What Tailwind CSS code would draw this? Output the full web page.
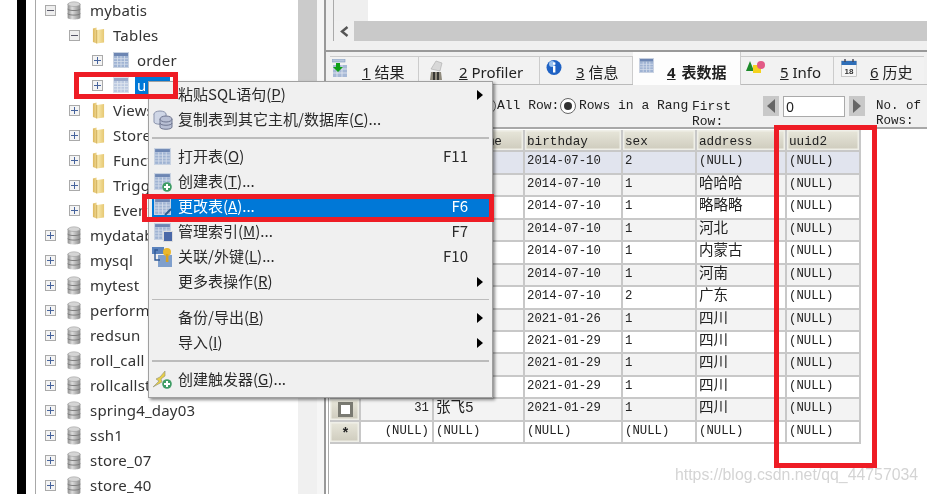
<!DOCTYPE html>
<html lang="zh">
<head>
<meta charset="utf-8">
<title>SQLyog</title>
<script src="https://cdn.jsdelivr.net/npm/@tailwindcss/browser@4"></script>
</head>
<body class="m-0 bg-white">
<svg class="absolute w-0 h-0" aria-hidden="true">
  <defs>
    <linearGradient id="dbg" x1="0" x2="1" y1="0" y2="0"><stop offset="0" stop-color="#8d8d8d"/><stop offset=".35" stop-color="#dcdcdc"/><stop offset="1" stop-color="#8a8a8a"/></linearGradient>
    <linearGradient id="fg" x1="0" x2="1" y1="0" y2="0"><stop offset="0" stop-color="#dcb65a"/><stop offset=".45" stop-color="#f7e6a8"/><stop offset="1" stop-color="#e6c873"/></linearGradient>
    <symbol id="db" viewBox="0 0 14 22">
      <path d="M0 3.5C0 1.5 14 1.5 14 3.5V18.5C14 21 0 21 0 18.5Z" fill="url(#dbg)"/>
      <ellipse cx="7" cy="3.5" rx="6.5" ry="2.6" fill="#d5d5d5" stroke="#9a9a9a" stroke-width=".6"/>
      <path d="M0 9C2 11 12 11 14 9M0 14C2 16 12 16 14 14" fill="none" stroke="#777" stroke-width="1"/>
    </symbol>
    <symbol id="folder" viewBox="0 0 14 18">
      <path d="M1 1.5 5 .5V3L13 2V16.5L5 17.5 1 16Z" fill="url(#fg)"/>
      <path d="M5 3V17.5" stroke="#c9a64f" stroke-width=".8"/>
    </symbol>
    <symbol id="table" viewBox="0 0 16 16">
      <rect x=".5" y=".5" width="15" height="15" fill="#fff" stroke="#c9d3e2"/>
      <rect x="1" y="1" width="14" height="3" fill="#6d86b3"/>
      <rect x="1" y="4" width="14" height="11" fill="#9fb3d3"/>
      <path d="M4.5 4V15M8 4V15M11.5 4V15M1 6.7H15M1 9.5H15M1 12.2H15" stroke="#d6deeb" stroke-width=".8"/>
    </symbol>
    <symbol id="plusg" viewBox="0 0 10 10">
      <circle cx="5" cy="5" r="4.8" fill="#3e9c64"/>
      <path d="M5 2V8M2 5H8" stroke="#fff" stroke-width="2"/>
    </symbol>
  </defs>
</svg>

<div class="relative w-[927px] h-[494px] overflow-hidden bg-white flex blur-[0.4px] font-['Noto_Sans',sans-serif] text-[#333]">
  <div class="w-[17px] shrink-0 bg-white"></div>
  <div class="w-[9px] shrink-0 bg-black"></div>
  <div class="w-[9px] shrink-0 bg-white"></div>
  <div class="w-[1px] shrink-0 bg-[#a8a8a8]"></div>

  <!-- tree -->
  <div class="w-[262px] shrink-0 h-full overflow-hidden text-[15px] tracking-[0.2px]">
    <div class="-mt-[2px]">
      <div class="flex items-center h-[25px] pl-[9px]">
        <span class="w-[11px] h-[11px] border border-[#aaa] bg-[#eee] flex items-center justify-center shrink-0"><span class="w-[7px] h-[1.5px] bg-[#556]"></span></span>
        <svg class="w-[14px] h-[20px] ml-[11px] shrink-0"><use href="#db"/></svg><span class="ml-[9px]">mybatis</span>
      </div>
      <div class="flex items-center h-[25px] pl-[33px]">
        <span class="w-[11px] h-[11px] border border-[#aaa] bg-[#eee] flex items-center justify-center shrink-0"><span class="w-[7px] h-[1.5px] bg-[#556]"></span></span>
        <svg class="w-[13px] h-[17px] ml-[12px] shrink-0"><use href="#folder"/></svg><span class="ml-[8px]">Tables</span>
      </div>
      <div class="flex items-center h-[25px] pl-[56px]">
        <span class="relative w-[11px] h-[11px] border border-[#aaa] bg-[#f4f4f4] flex items-center justify-center shrink-0"><span class="w-[7px] h-[1.5px] bg-[#46639c]"></span><span class="absolute w-[1.5px] h-[7px] bg-[#46639c]"></span></span>
        <svg class="w-[16px] h-[16px] ml-[10px] -mt-[1px] shrink-0"><use href="#table"/></svg><span class="ml-[8px]">order</span>
      </div>
      <div class="flex items-center h-[25px] pl-[56px]">
        <span class="relative w-[11px] h-[11px] border border-[#aaa] bg-[#f4f4f4] flex items-center justify-center shrink-0"><span class="w-[7px] h-[1.5px] bg-[#46639c]"></span><span class="absolute w-[1.5px] h-[7px] bg-[#46639c]"></span></span>
        <svg class="w-[16px] h-[16px] ml-[10px] -mt-[1px] shrink-0 opacity-70"><use href="#table"/></svg><span class="ml-[6px] w-[35px] h-[19px] bg-[#0078d7] text-white pl-[2px] leading-[18px]">u</span>
      </div>
      <div class="flex items-center h-[25px] pl-[33px]">
        <span class="relative w-[11px] h-[11px] border border-[#aaa] bg-[#f4f4f4] flex items-center justify-center shrink-0"><span class="w-[7px] h-[1.5px] bg-[#46639c]"></span><span class="absolute w-[1.5px] h-[7px] bg-[#46639c]"></span></span>
        <svg class="w-[13px] h-[17px] ml-[12px] shrink-0"><use href="#folder"/></svg><span class="ml-[8px]">Views</span>
      </div>
      <div class="flex items-center h-[25px] pl-[33px]">
        <span class="relative w-[11px] h-[11px] border border-[#aaa] bg-[#f4f4f4] flex items-center justify-center shrink-0"><span class="w-[7px] h-[1.5px] bg-[#46639c]"></span><span class="absolute w-[1.5px] h-[7px] bg-[#46639c]"></span></span>
        <svg class="w-[13px] h-[17px] ml-[12px] shrink-0"><use href="#folder"/></svg><span class="ml-[8px]">Stored</span>
      </div>
      <div class="flex items-center h-[25px] pl-[33px]">
        <span class="relative w-[11px] h-[11px] border border-[#aaa] bg-[#f4f4f4] flex items-center justify-center shrink-0"><span class="w-[7px] h-[1.5px] bg-[#46639c]"></span><span class="absolute w-[1.5px] h-[7px] bg-[#46639c]"></span></span>
        <svg class="w-[13px] h-[17px] ml-[12px] shrink-0"><use href="#folder"/></svg><span class="ml-[8px]">Functions</span>
      </div>
      <div class="flex items-center h-[25px] pl-[33px]">
        <span class="relative w-[11px] h-[11px] border border-[#aaa] bg-[#f4f4f4] flex items-center justify-center shrink-0"><span class="w-[7px] h-[1.5px] bg-[#46639c]"></span><span class="absolute w-[1.5px] h-[7px] bg-[#46639c]"></span></span>
        <svg class="w-[13px] h-[17px] ml-[12px] shrink-0"><use href="#folder"/></svg><span class="ml-[8px]">Triggers</span>
      </div>
      <div class="flex items-center h-[25px] pl-[33px]">
        <span class="relative w-[11px] h-[11px] border border-[#aaa] bg-[#f4f4f4] flex items-center justify-center shrink-0"><span class="w-[7px] h-[1.5px] bg-[#46639c]"></span><span class="absolute w-[1.5px] h-[7px] bg-[#46639c]"></span></span>
        <svg class="w-[13px] h-[17px] ml-[12px] shrink-0"><use href="#folder"/></svg><span class="ml-[8px]">Events</span>
      </div>
      <div class="flex items-center h-[25px] pl-[9px]">
        <span class="relative w-[11px] h-[11px] border border-[#aaa] bg-[#f4f4f4] flex items-center justify-center shrink-0"><span class="w-[7px] h-[1.5px] bg-[#46639c]"></span><span class="absolute w-[1.5px] h-[7px] bg-[#46639c]"></span></span>
        <svg class="w-[14px] h-[20px] ml-[11px] shrink-0"><use href="#db"/></svg><span class="ml-[9px]">mydatabase</span>
      </div>
      <div class="flex items-center h-[25px] pl-[9px]">
        <span class="relative w-[11px] h-[11px] border border-[#aaa] bg-[#f4f4f4] flex items-center justify-center shrink-0"><span class="w-[7px] h-[1.5px] bg-[#46639c]"></span><span class="absolute w-[1.5px] h-[7px] bg-[#46639c]"></span></span>
        <svg class="w-[14px] h-[20px] ml-[11px] shrink-0"><use href="#db"/></svg><span class="ml-[9px]">mysql</span>
      </div>
      <div class="flex items-center h-[25px] pl-[9px]">
        <span class="relative w-[11px] h-[11px] border border-[#aaa] bg-[#f4f4f4] flex items-center justify-center shrink-0"><span class="w-[7px] h-[1.5px] bg-[#46639c]"></span><span class="absolute w-[1.5px] h-[7px] bg-[#46639c]"></span></span>
        <svg class="w-[14px] h-[20px] ml-[11px] shrink-0"><use href="#db"/></svg><span class="ml-[9px]">mytest</span>
      </div>
      <div class="flex items-center h-[25px] pl-[9px]">
        <span class="relative w-[11px] h-[11px] border border-[#aaa] bg-[#f4f4f4] flex items-center justify-center shrink-0"><span class="w-[7px] h-[1.5px] bg-[#46639c]"></span><span class="absolute w-[1.5px] h-[7px] bg-[#46639c]"></span></span>
        <svg class="w-[14px] h-[20px] ml-[11px] shrink-0"><use href="#db"/></svg><span class="ml-[9px]">performance</span>
      </div>
      <div class="flex items-center h-[25px] pl-[9px]">
        <span class="relative w-[11px] h-[11px] border border-[#aaa] bg-[#f4f4f4] flex items-center justify-center shrink-0"><span class="w-[7px] h-[1.5px] bg-[#46639c]"></span><span class="absolute w-[1.5px] h-[7px] bg-[#46639c]"></span></span>
        <svg class="w-[14px] h-[20px] ml-[11px] shrink-0"><use href="#db"/></svg><span class="ml-[9px]">redsun</span>
      </div>
      <div class="flex items-center h-[25px] pl-[9px]">
        <span class="relative w-[11px] h-[11px] border border-[#aaa] bg-[#f4f4f4] flex items-center justify-center shrink-0"><span class="w-[7px] h-[1.5px] bg-[#46639c]"></span><span class="absolute w-[1.5px] h-[7px] bg-[#46639c]"></span></span>
        <svg class="w-[14px] h-[20px] ml-[11px] shrink-0"><use href="#db"/></svg><span class="ml-[9px]">roll_call</span>
      </div>
      <div class="flex items-center h-[25px] pl-[9px]">
        <span class="relative w-[11px] h-[11px] border border-[#aaa] bg-[#f4f4f4] flex items-center justify-center shrink-0"><span class="w-[7px] h-[1.5px] bg-[#46639c]"></span><span class="absolute w-[1.5px] h-[7px] bg-[#46639c]"></span></span>
        <svg class="w-[14px] h-[20px] ml-[11px] shrink-0"><use href="#db"/></svg><span class="ml-[9px]">rollcallst</span>
      </div>
      <div class="flex items-center h-[25px] pl-[9px]">
        <span class="relative w-[11px] h-[11px] border border-[#aaa] bg-[#f4f4f4] flex items-center justify-center shrink-0"><span class="w-[7px] h-[1.5px] bg-[#46639c]"></span><span class="absolute w-[1.5px] h-[7px] bg-[#46639c]"></span></span>
        <svg class="w-[14px] h-[20px] ml-[11px] shrink-0"><use href="#db"/></svg><span class="ml-[9px]">spring4_day03</span>
      </div>
      <div class="flex items-center h-[25px] pl-[9px]">
        <span class="relative w-[11px] h-[11px] border border-[#aaa] bg-[#f4f4f4] flex items-center justify-center shrink-0"><span class="w-[7px] h-[1.5px] bg-[#46639c]"></span><span class="absolute w-[1.5px] h-[7px] bg-[#46639c]"></span></span>
        <svg class="w-[14px] h-[20px] ml-[11px] shrink-0"><use href="#db"/></svg><span class="ml-[9px]">ssh1</span>
      </div>
      <div class="flex items-center h-[25px] pl-[9px]">
        <span class="relative w-[11px] h-[11px] border border-[#aaa] bg-[#f4f4f4] flex items-center justify-center shrink-0"><span class="w-[7px] h-[1.5px] bg-[#46639c]"></span><span class="absolute w-[1.5px] h-[7px] bg-[#46639c]"></span></span>
        <svg class="w-[14px] h-[20px] ml-[11px] shrink-0"><use href="#db"/></svg><span class="ml-[9px]">store_07</span>
      </div>
      <div class="flex items-center h-[25px] pl-[9px]">
        <span class="relative w-[11px] h-[11px] border border-[#aaa] bg-[#f4f4f4] flex items-center justify-center shrink-0"><span class="w-[7px] h-[1.5px] bg-[#46639c]"></span><span class="absolute w-[1.5px] h-[7px] bg-[#46639c]"></span></span>
        <svg class="w-[14px] h-[20px] ml-[11px] shrink-0"><use href="#db"/></svg><span class="ml-[9px]">store_40</span>
      </div>
    </div>
  </div>

  <!-- tree scrollbar -->
  <div class="w-[19px] shrink-0 h-full bg-[#f0f0f0]"><div class="h-[250px] bg-[#cbcbcb]"></div></div>
  <div class="w-[7px] shrink-0 h-full bg-[#f6f6f6]"></div>
  <div class="w-[2px] shrink-0 h-full bg-[#999]"></div>

  <!-- right pane -->
  <div class="flex-1 min-w-0 h-full flex flex-col">
    <div class="h-[41px] shrink-0 bg-[#f0f0f0] pl-[7px]">
      <div class="h-full border-l border-[#aaa] flex flex-col">
        <div class="h-[21px] flex"><div class="w-[34px] bg-[#efefef]"></div><div class="flex-1 bg-white"></div></div>
        <div class="h-[20px] flex">
          <div class="w-[20px] bg-[#f0f0f0] flex items-center justify-center"><svg class="w-[9px] h-[11px]" viewBox="0 0 9 11"><path d="M7.5 1 2 5.5 7.5 10" fill="none" stroke="#555" stroke-width="2.4"/></svg></div>
          <div class="flex-1 bg-[#c9c9c9]"></div>
        </div>
      </div>
    </div>
    <div class="h-[9px] shrink-0 bg-[#f0f0f0]"></div>
    <div class="h-[2px] shrink-0 bg-[#999]"></div>

    <!-- tabs -->
    <div class="h-[33px] shrink-0 bg-[#f0f0f0] pl-[4px] pt-[4px] flex text-[15px] text-[#222] font-['Noto_Sans','Noto_Sans_CJK_SC',sans-serif] border-b border-[#bbb]">
      <div class="w-[89px] h-full flex items-center bg-[#f2f2f2] border-r border-t border-[#ccc] pl-[2px]">
        <svg class="w-[15px] h-[18px] -mt-[6px] shrink-0" viewBox="0 0 15 18"><rect x="0" y="0" width="13" height="3" fill="#b7c6dc" stroke="#7d96bd" stroke-width=".6"/><rect x="1" y="6" width="14" height="12" fill="#a7b9d6"/><path d="M5 6V18M10 6V18M1 10H15M1 14H15" stroke="#e4e9f2" stroke-width=".8"/><path d="M4 4H8V8H11L6 13 1 8H4Z" fill="#10a018"/></svg>
        <span class="ml-[15px] mt-[4px]"><span class="underline">1</span> 结果</span>
      </div>
      <div class="w-[121px] h-full flex items-center bg-[#f2f2f2] border-r border-t border-[#ccc] pl-[9px]">
        <svg class="w-[17px] h-[20px] -mt-[2px] shrink-0" viewBox="0 0 17 20"><path d="M3 9 8 1l6 2-2 8Z" fill="#d8d8d8" stroke="#aaa" stroke-width=".6"/><path d="M3 12h10l1 8H2Z" fill="#8f8a7d"/><path d="M6 12v8M10 12v8" stroke="#222" stroke-width="1.6"/></svg>
        <span class="ml-[14px] mt-[4px]"><span class="underline">2</span> Profiler</span>
      </div>
      <div class="w-[93px] h-full flex items-center bg-[#f2f2f2] border-r border-t border-[#ccc] pl-[6px]">
        <svg class="w-[16px] h-[17px] -mt-[6px] shrink-0" viewBox="0 0 16 17"><circle cx="8" cy="8.5" r="7.5" fill="#1f62c4"/><circle cx="6" cy="5" r="3" fill="#9cc3f0"/><rect x="7" y="7" width="2.4" height="6.5" fill="#fff"/><rect x="7" y="3.5" width="2.4" height="2.2" fill="#fff"/></svg>
        <span class="ml-[14px] mt-[4px]"><span class="underline">3</span> 信息</span>
      </div>
      <div class="w-[108px] h-[34px] -mt-[4px] flex items-center bg-[#fdfdfd] border-r border-[#ccc] pl-[6px] font-bold">
        <svg class="w-[15px] h-[17px] -mt-[8px] shrink-0"><use href="#table"/></svg>
        <span class="ml-[13px] mt-[7px]"><span class="underline mr-[2px]">4</span> 表数据</span>
      </div>
      <div class="w-[93px] h-full flex items-center bg-[#f2f2f2] border-r border-t border-[#ccc] pl-[5px]">
        <svg class="w-[20px] h-[14px] -mt-[8px] shrink-0" viewBox="0 0 20 14"><path d="M0 11 4 1l4 10Z" fill="#1d8a2a"/><rect x="7" y="5" width="8" height="8" fill="#f4d21e"/><circle cx="15" cy="5" r="4" fill="#e25a86"/></svg>
        <span class="ml-[14px] mt-[4px]"><span class="underline">5</span> Info</span>
      </div>
      <div class="w-[90px] h-full flex items-center bg-[#f2f2f2] border-t border-[#ccc] pl-[7px]">
        <svg class="w-[16px] h-[18px] -mt-[6px] shrink-0" viewBox="0 0 16 18"><rect x=".5" y="2" width="15" height="15.5" fill="#f6f6f6" stroke="#aaa" stroke-width=".6"/><rect x=".5" y="2" width="15" height="4" fill="#2f6fb8"/><path d="M4 0V3M12 0V3" stroke="#445" stroke-width="1.4"/><text x="8" y="14.5" text-anchor="middle" font-size="8" font-weight="700" fill="#333" font-family="Liberation Sans">18</text></svg>
        <span class="ml-[13px] mt-[4px]"><span class="underline">6</span> 历史</span>
      </div>
    </div>

    <!-- toolbar -->
    <div class="h-[44px] shrink-0 bg-[#f0f0f0] border-b-2 border-[#a8a8a8] flex items-center pl-[154px] font-['Liberation_Mono',monospace] text-[13px] text-[#222]">
      <span class="w-[16px] h-[16px] rounded-full border border-[#666] bg-white shrink-0"></span>
      <span class="ml-[1px] w-[63px] shrink-0 whitespace-nowrap">All Row:</span>
      <span class="w-[16px] h-[16px] rounded-full border border-[#666] bg-white flex items-center justify-center shrink-0"><span class="w-[8px] h-[8px] rounded-full bg-[#333]"></span></span>
      <span class="ml-[3px] w-[110px] shrink-0 whitespace-nowrap">Rows in a Rang</span>
      <span class="ml-[3px] mt-[15px] w-[71px] shrink-0 leading-[15px]">First<br>Row:</span>
      <span class="w-[16px] h-[20px] bg-[#c8c8c8] flex items-center justify-center shrink-0"><span class="w-0 h-0 border-y-[7px] border-y-transparent border-r-[8px] border-r-[#666]"></span></span>
      <span class="ml-[4px] w-[62px] h-[21px] bg-white border border-[#aaa] pl-[2px] text-[14px] leading-[19px] font-['Noto_Sans',sans-serif] shrink-0">0</span>
      <span class="ml-[4px] w-[16px] h-[20px] bg-[#c8c8c8] flex items-center justify-center shrink-0"><span class="w-0 h-0 border-y-[7px] border-y-transparent border-l-[8px] border-l-[#666]"></span></span>
      <span class="ml-[11px] mt-[15px] w-[48px] shrink-0 leading-[15px] text-[12.5px]">No. of<br>Rows:</span>
    </div>

    <!-- grid -->
    <div class="flex-1 min-h-0 pl-[2px] bg-white">
      <div class="h-full border-l border-[#aaa] pl-[1px] pt-[1px] font-['Liberation_Mono','Noto_Sans_CJK_SC',monospace] text-[12.3px] text-[#222]">
        <div class="w-[531px] grid grid-cols-[31px_73px_91px_98px_74px_90px_74px] auto-rows-[22.45px] [&>div]:border-r-2 [&>div]:border-b-2 [&>div]:border-[#c8c8c8] [&>div]:pl-[2px] [&>div]:whitespace-nowrap [&>div]:overflow-hidden [&>div:nth-child(-n+7)]:shadow-[inset_0_0_0_1.5px_#efefe8] [&>div:nth-child(7n+1)]:shadow-[inset_0_0_0_1.5px_#efefe8]">
          <!-- header -->
          <div class="bg-gradient-to-b from-[#e8e7db] to-[#cecbbd]"></div>
          <div class="bg-gradient-to-b from-[#e8e7db] to-[#cecbbd]"></div>
          <div class="bg-gradient-to-b from-[#e8e7db] to-[#cecbbd] text-[12.7px] leading-[24px]"><span class="ml-[5px]">username</span></div>
          <div class="bg-gradient-to-b from-[#e8e7db] to-[#cecbbd] text-[12.7px] leading-[24px]">birthday</div>
          <div class="bg-gradient-to-b from-[#e8e7db] to-[#cecbbd] text-[12.7px] leading-[24px]">sex</div>
          <div class="bg-gradient-to-b from-[#e8e7db] to-[#cecbbd] text-[12.7px] leading-[24px]">address</div>
          <div class="bg-gradient-to-b from-[#e8e7db] to-[#cecbbd] text-[12.7px] leading-[24px]">uuid2</div>
          <!-- row 1 -->
          <div class="bg-gradient-to-b from-[#e8e7db] to-[#cecbbd]"></div>
          <div class="bg-[#e1e4ee]"></div><div class="bg-[#e1e4ee]"></div>
          <div class="bg-[#e1e4ee] leading-[18px]">2014-07-10</div>
          <div class="bg-[#e1e4ee] leading-[18px]">2</div>
          <div class="bg-[#e1e4ee] leading-[18px]">(NULL)</div>
          <div class="bg-[#e1e4ee] leading-[18px]">(NULL)</div>
          <!-- row 2 -->
          <div class="bg-gradient-to-b from-[#e8e7db] to-[#cecbbd]"></div>
          <div class="bg-[#f3f3f3]"></div><div class="bg-[#f3f3f3]"></div>
          <div class="bg-[#f3f3f3] leading-[18px]">2014-07-10</div>
          <div class="bg-[#f3f3f3] leading-[18px]">1</div>
          <div class="bg-[#f3f3f3] leading-[18px] text-[14.5px]">哈哈哈</div>
          <div class="bg-[#f3f3f3] leading-[18px]">(NULL)</div>
          <!-- row 3 -->
          <div class="bg-gradient-to-b from-[#e8e7db] to-[#cecbbd]"></div>
          <div></div><div></div>
          <div class="leading-[18px]">2014-07-10</div>
          <div class="leading-[18px]">1</div>
          <div class="leading-[18px] text-[14.5px]">略略略</div>
          <div class="leading-[18px]">(NULL)</div>
          <!-- row 4 -->
          <div class="bg-gradient-to-b from-[#e8e7db] to-[#cecbbd]"></div>
          <div class="bg-[#f3f3f3]"></div><div class="bg-[#f3f3f3]"></div>
          <div class="bg-[#f3f3f3] leading-[18px]">2014-07-10</div>
          <div class="bg-[#f3f3f3] leading-[18px]">1</div>
          <div class="bg-[#f3f3f3] leading-[18px] text-[14.5px]">河北</div>
          <div class="bg-[#f3f3f3] leading-[18px]">(NULL)</div>
          <!-- row 5 -->
          <div class="bg-gradient-to-b from-[#e8e7db] to-[#cecbbd]"></div>
          <div></div><div></div>
          <div class="leading-[18px]">2014-07-10</div>
          <div class="leading-[18px]">1</div>
          <div class="leading-[18px] text-[14.5px]">内蒙古</div>
          <div class="leading-[18px]">(NULL)</div>
          <!-- row 6 -->
          <div class="bg-gradient-to-b from-[#e8e7db] to-[#cecbbd]"></div>
          <div class="bg-[#f3f3f3]"></div><div class="bg-[#f3f3f3]"></div>
          <div class="bg-[#f3f3f3] leading-[18px]">2014-07-10</div>
          <div class="bg-[#f3f3f3] leading-[18px]">1</div>
          <div class="bg-[#f3f3f3] leading-[18px] text-[14.5px]">河南</div>
          <div class="bg-[#f3f3f3] leading-[18px]">(NULL)</div>
          <!-- row 7 -->
          <div class="bg-gradient-to-b from-[#e8e7db] to-[#cecbbd]"></div>
          <div></div><div></div>
          <div class="leading-[18px]">2014-07-10</div>
          <div class="leading-[18px]">2</div>
          <div class="leading-[18px] text-[14.5px]">广东</div>
          <div class="leading-[18px]">(NULL)</div>
          <!-- row 8 -->
          <div class="bg-gradient-to-b from-[#e8e7db] to-[#cecbbd]"></div>
          <div class="bg-[#f3f3f3]"></div><div class="bg-[#f3f3f3]"></div>
          <div class="bg-[#f3f3f3] leading-[18px]">2021-01-26</div>
          <div class="bg-[#f3f3f3] leading-[18px]">1</div>
          <div class="bg-[#f3f3f3] leading-[18px] text-[14.5px]">四川</div>
          <div class="bg-[#f3f3f3] leading-[18px]">(NULL)</div>
          <!-- row 9 -->
          <div class="bg-gradient-to-b from-[#e8e7db] to-[#cecbbd]"></div>
          <div></div><div></div>
          <div class="leading-[18px]">2021-01-29</div>
          <div class="leading-[18px]">1</div>
          <div class="leading-[18px] text-[14.5px]">四川</div>
          <div class="leading-[18px]">(NULL)</div>
          <!-- row 10 -->
          <div class="bg-gradient-to-b from-[#e8e7db] to-[#cecbbd]"></div>
          <div class="bg-[#f3f3f3]"></div><div class="bg-[#f3f3f3]"></div>
          <div class="bg-[#f3f3f3] leading-[18px]">2021-01-29</div>
          <div class="bg-[#f3f3f3] leading-[18px]">1</div>
          <div class="bg-[#f3f3f3] leading-[18px] text-[14.5px]">四川</div>
          <div class="bg-[#f3f3f3] leading-[18px]">(NULL)</div>
          <!-- row 11 -->
          <div class="bg-gradient-to-b from-[#e8e7db] to-[#cecbbd]"></div>
          <div></div><div></div>
          <div class="leading-[18px]">2021-01-29</div>
          <div class="leading-[18px]">1</div>
          <div class="leading-[18px] text-[14.5px]">四川</div>
          <div class="leading-[18px]">(NULL)</div>
          <!-- row 12 -->
          <div class="bg-gradient-to-b from-[#e8e7db] to-[#cecbbd] flex items-center justify-center"><span class="w-[15px] h-[15px] border-[3px] border-[#7a7a72] bg-white"></span></div>
          <div class="bg-[#f3f3f3] text-right pr-[3px] leading-[18px]">31</div>
          <div class="bg-[#f3f3f3] leading-[18px] text-[14.5px]">张飞5</div>
          <div class="bg-[#f3f3f3] leading-[18px]">2021-01-29</div>
          <div class="bg-[#f3f3f3] leading-[18px]">1</div>
          <div class="bg-[#f3f3f3] leading-[18px] text-[14.5px]">四川</div>
          <div class="bg-[#f3f3f3] leading-[18px]">(NULL)</div>
          <!-- row 13 -->
          <div class="bg-gradient-to-b from-[#e8e7db] to-[#cecbbd] text-center leading-[24px] font-bold text-[14px]">*</div>
          <div class="text-right pr-[3px] leading-[18px]">(NULL)</div>
          <div class="leading-[18px]">(NULL)</div>
          <div class="leading-[18px]">(NULL)</div>
          <div class="leading-[18px]">(NULL)</div>
          <div class="leading-[18px]">(NULL)</div>
          <div class="leading-[18px]">(NULL)</div>
        </div>
      </div>
    </div>
  </div>

  <!-- context menu -->
  <div class="absolute left-[148px] top-[81px] w-[345px] h-[317px] bg-[#f0f0f0] border border-[#a0a0a0] shadow-[2px_2px_3px_rgba(0,0,0,0.45)] px-[3px] text-[15px] text-[#2a2a2a] font-['Noto_Sans_CJK_SC','Noto_Sans',sans-serif]">
    <div class="h-[25px] flex items-center pl-[26px]"><span>粘贴SQL语句(<span class="underline">P</span>)</span><span class="ml-auto mr-[6px] w-0 h-0 border-y-[5px] border-y-transparent border-l-[6px] border-l-black"></span></div>
    <div class="h-[25px] flex items-center"><svg class="w-[20px] h-[20px] ml-[1px] shrink-0" viewBox="0 0 20 20"><g fill="#cfd6e6" stroke="#8b94ad"><ellipse cx="7" cy="4" rx="6" ry="3"/><path d="M1 4v8c0 3 12 3 12 0V4"/></g><g fill="#b8bfd4" stroke="#6f7690"><path d="M7 9v8c0 3 12 3 12 0V9"/><ellipse cx="13" cy="9" rx="6" ry="3"/><path d="M7 13c0 3 12 3 12 0" fill="none"/></g></svg><span class="ml-[5px]">复制表到其它主机/数据库(<span class="underline">C</span>)...</span></div>
    <div class="h-[12px] flex items-center"><div class="w-full h-[1.5px] bg-[#bcbcbc]"></div></div>
    <div class="h-[25px] flex items-center"><svg class="w-[17px] h-[17px] ml-[2px] shrink-0"><use href="#table"/></svg><span class="ml-[7px]">打开表(<span class="underline">O</span>)</span><span class="ml-auto mr-[21px]">F11</span></div>
    <div class="h-[25px] flex items-center"><span class="relative w-[17px] h-[17px] ml-[2px] shrink-0"><svg class="w-[17px] h-[17px]"><use href="#table"/></svg><svg class="absolute left-[8px] top-[9px] w-[10px] h-[10px]"><use href="#plusg"/></svg></span><span class="ml-[7px]">创建表(<span class="underline">T</span>)...</span></div>
    <div class="h-[25px] flex items-center bg-[#0078d7] text-white"><span class="relative w-[17px] h-[17px] ml-[2px] shrink-0"><svg class="w-[17px] h-[17px]"><use href="#table"/></svg><svg class="absolute left-[10px] top-[10px] w-[8px] h-[8px]" viewBox="0 0 8 8"><path d="M1 7 7 1" stroke="#2f5f8f" stroke-width="2"/></svg></span><span class="ml-[7px]">更改表(<span class="underline">A</span>)...</span><span class="ml-auto mr-[21px]">F6</span></div>
    <div class="h-[25px] flex items-center"><span class="relative w-[17px] h-[17px] ml-[2px] shrink-0"><svg class="w-[17px] h-[17px]"><use href="#table"/></svg><span class="absolute left-[9px] top-[8px] w-[10px] h-[11px] bg-[#4a68a8] border border-[#ddd]"></span></span><span class="ml-[7px]">管理索引(<span class="underline">M</span>)...</span><span class="ml-auto mr-[21px]">F7</span></div>
    <div class="h-[25px] flex items-center"><span class="relative w-[20px] h-[20px] shrink-0"><svg class="w-[20px] h-[20px]" viewBox="0 0 20 20"><rect x="0" y="0" width="12" height="7" fill="#5b83bd"/><rect x="6" y="8" width="14" height="12" fill="#7f9fcc"/><path d="M6 3H3V13H8" fill="none" stroke="#2f5a96" stroke-width="1.4"/><circle cx="15" cy="5" r="4" fill="#eab72c"/><rect x="13.8" y="7" width="2.6" height="8" fill="#d9a21e"/></svg></span><span class="ml-[6px]">关联/外键(<span class="underline">L</span>)...</span><span class="ml-auto mr-[21px]">F10</span></div>
    <div class="h-[25px] flex items-center pl-[26px]"><span>更多表操作(<span class="underline">R</span>)</span><span class="ml-auto mr-[6px] w-0 h-0 border-y-[5px] border-y-transparent border-l-[6px] border-l-black"></span></div>
    <div class="h-[11px] flex items-center"><div class="w-full h-[1.5px] bg-[#bcbcbc]"></div></div>
    <div class="h-[25px] flex items-center pl-[26px]"><span>备份/导出(<span class="underline">B</span>)</span><span class="ml-auto mr-[6px] w-0 h-0 border-y-[5px] border-y-transparent border-l-[6px] border-l-black"></span></div>
    <div class="h-[25px] flex items-center pl-[26px]"><span>导入(<span class="underline">I</span>)</span><span class="ml-auto mr-[6px] w-0 h-0 border-y-[5px] border-y-transparent border-l-[6px] border-l-black"></span></div>
    <div class="h-[12px] flex items-center"><div class="w-full h-[1.5px] bg-[#bcbcbc]"></div></div>
    <div class="h-[25px] flex items-center"><span class="relative w-[20px] h-[20px] shrink-0"><svg class="w-[20px] h-[20px]" viewBox="0 0 20 20"><path d="M13 1 8 7l-4 2 3 2-6 6 9-5-1-3 4-3Z" fill="#e8cf45" stroke="#9a9a80" stroke-width=".7"/></svg><svg class="absolute left-[10px] top-[9px] w-[10px] h-[10px]"><use href="#plusg"/></svg></span><span class="ml-[6px]">创建触发器(<span class="underline">G</span>)...</span></div>
  </div>

  <!-- annotations -->
  <div class="absolute left-[74px] top-[72px] w-[104px] h-[27px] border-[5px] border-[#ee1c25]"></div>
  <div class="absolute left-[142px] top-[194px] w-[352px] h-[28px] border-[5px] border-[#ee1c25]"></div>
  <div class="absolute left-[774px] top-[125px] w-[103px] h-[343px] border-[5px] border-[#ee1c25]"></div>

  <!-- watermark -->
  <div class="absolute left-[675px] top-[465px] text-[15.85px] leading-[20px] text-[#d4d4d4] font-['Liberation_Sans',sans-serif] whitespace-nowrap">https://blog.csdn.net/qq_44757034</div>
</div>
</body>
</html>
